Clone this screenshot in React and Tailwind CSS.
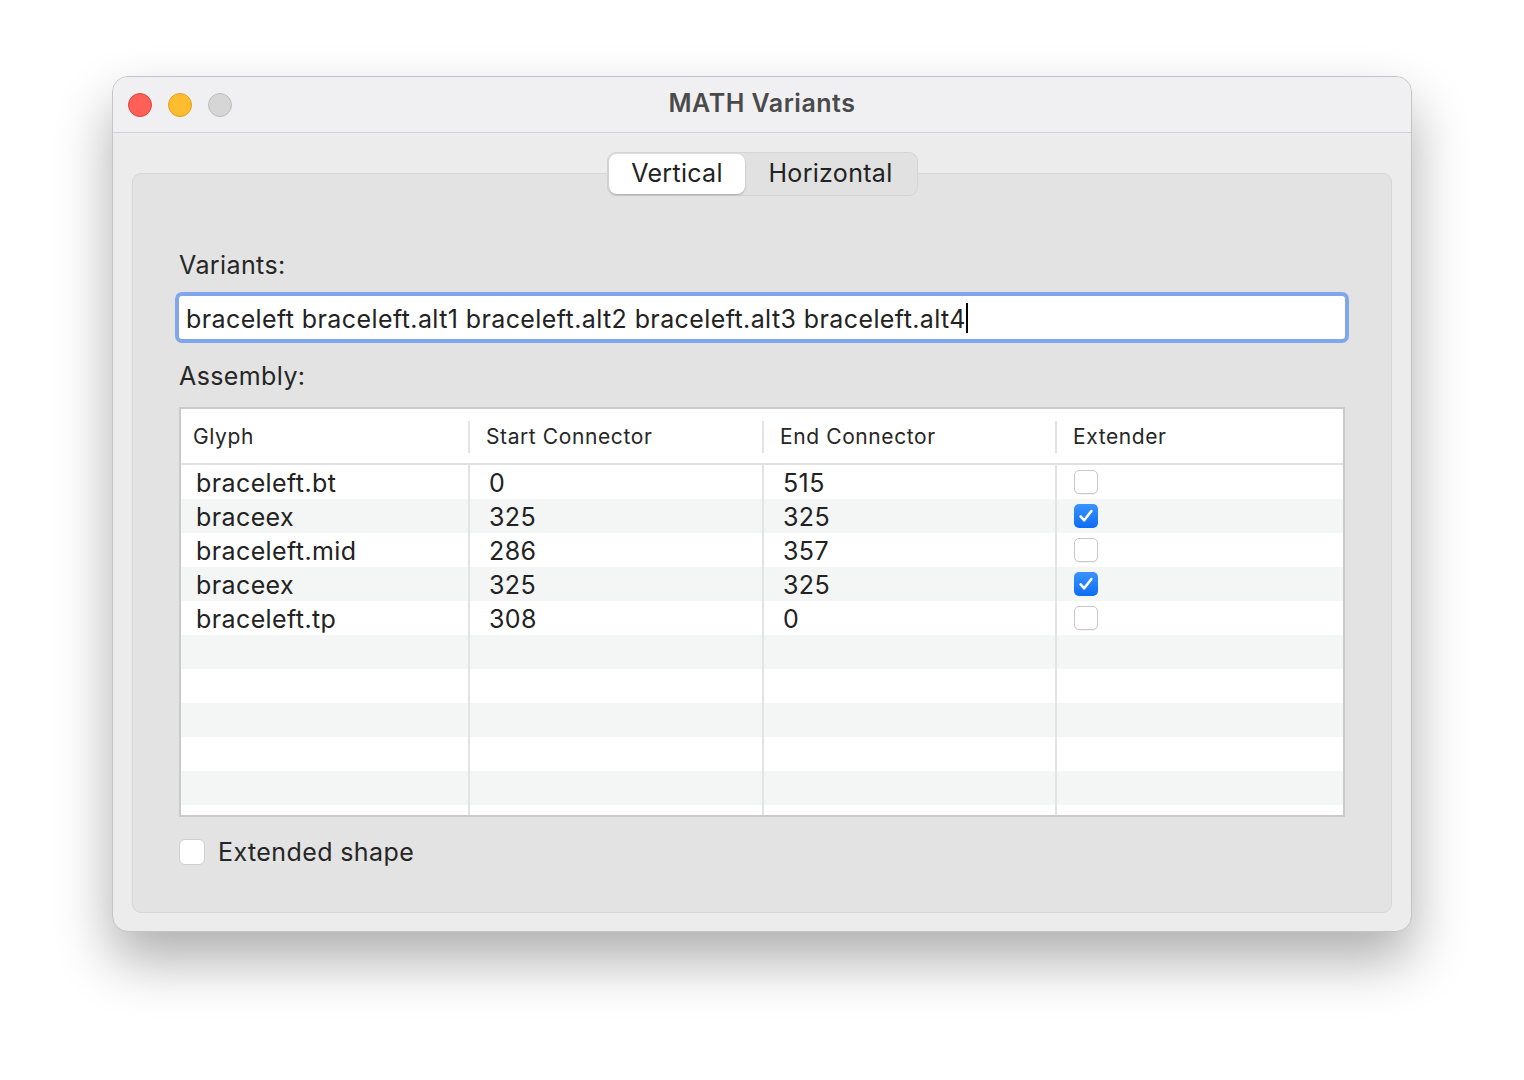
import { Fragment } from 'react';

const rows = [
  { glyph: 'braceleft.bt', start: '0', end: '515', ext: false },
  { glyph: 'braceex', start: '325', end: '325', ext: true },
  { glyph: 'braceleft.mid', start: '286', end: '357', ext: false },
  { glyph: 'braceex', start: '325', end: '325', ext: true },
  { glyph: 'braceleft.tp', start: '308', end: '0', ext: false },
  null, null, null, null, null, null,
];

function CheckBox({ checked }) {
  if (checked) {
    return (
      <div className="w-[24px] h-[24px] rounded-[5px] bg-gradient-to-b from-[#3a93ff] to-[#0a6cf5] flex items-center justify-center">
        <svg width="18" height="18" viewBox="0 0 16 16" fill="none">
          <path d="M3.2 8.4 L6.4 11.8 L12.8 3.6" stroke="white" strokeWidth="2.3" strokeLinecap="round" strokeLinejoin="round" />
        </svg>
      </div>
    );
  }
  return <div className="w-[24px] h-[24px] rounded-[5px] bg-white border border-[#c9c9c9] shadow-[0_1px_1px_rgba(0,0,0,0.05)]" />;
}

export default function App() {
  return (
    <div className="w-[1524px] h-[1080px] bg-white pt-[76px] pl-[112px]" style={{ fontFamily: 'Inter, "Noto Sans", sans-serif' }}>
      <div className="w-[1300px] h-[856px] rounded-[16px] bg-[#ececec] border border-[#c4c4c4] overflow-hidden shadow-[0_28px_55px_rgba(0,0,0,0.32)] flex flex-col">
        {/* title bar */}
        <div className="h-[56px] bg-[#f0f0f2] border-b border-[#d2d2d2] flex items-center px-[15px] relative shrink-0">
          <div className="flex gap-[16px]">
            <div className="w-[24px] h-[24px] rounded-full bg-[#fe5f57] border border-[#e0443e]" />
            <div className="w-[24px] h-[24px] rounded-full bg-[#febc2e] border border-[#dea123]" />
            <div className="w-[24px] h-[24px] rounded-full bg-[#d6d6d6] border border-[#bdbdbd]" />
          </div>
          <div className="absolute inset-0 flex items-center justify-center text-[25px] font-semibold text-[#4a4a4a] tracking-[0.5px] pb-[2px]">
            MATH Variants
          </div>
        </div>

        <div className="flex-1 px-[19px] pt-[19px] pb-[20px] relative">
          {/* tab box */}
          <div className="mt-[21px] h-[740px] rounded-[9px] bg-[#e3e3e3] border border-[#d6d6d6] px-[46px] pt-[77px] text-[25px] tracking-[0.4px]">
            <div className="text-[#262626] leading-[28px]">Variants:</div>
            <div className="mt-[13px] ml-[-4px] mr-[-4px] rounded-[7px] border-[4px] border-[#80a7ec] bg-white h-[51px] flex items-center pl-[7px]">
              <span className="text-[#222] leading-[28px] pt-[3px]">braceleft braceleft.alt1 braceleft.alt2 braceleft.alt3 braceleft.alt4</span>
              <span className="w-[2px] h-[30px] bg-black" />
            </div>
            <div className="mt-[19px] text-[#262626] leading-[28px]">Assembly:</div>

            {/* table */}
            <div className="mt-[17px] h-[410px] border-[2px] border-[#cacaca] bg-white overflow-hidden">
              <div className="h-[56px] border-b-[2px] border-[#e1e1e1] flex items-center text-[21px] tracking-[0.6px] text-[#262626] pt-[2px]">
                <div className="w-[289px] pl-[12px] border-r-[2px] border-[#e3e3e3] h-[32px] flex items-center">Glyph</div>
                <div className="w-[294px] pl-[16px] border-r-[2px] border-[#e3e3e3] h-[32px] flex items-center">Start Connector</div>
                <div className="w-[293px] pl-[16px] border-r-[2px] border-[#e3e3e3] h-[32px] flex items-center">End Connector</div>
                <div className="flex-1 pl-[16px] h-[32px] flex items-center">Extender</div>
              </div>
              {rows.map((r, i) => (
                <div key={i} className={`h-[34px] flex items-center text-[#222] ${i % 2 === 1 ? 'bg-[#f4f5f5]' : 'bg-white'}`}>
                  <div className="w-[289px] pl-[15px] pt-[3px] h-full flex items-center border-r-[2px] border-[#e3e3e3]">{r && r.glyph}</div>
                  <div className="w-[294px] pl-[19px] pt-[3px] h-full flex items-center border-r-[2px] border-[#e3e3e3]">{r && r.start}</div>
                  <div className="w-[293px] pl-[19px] pt-[3px] h-full flex items-center border-r-[2px] border-[#e3e3e3]">{r && r.end}</div>
                  <div className="flex-1 pl-[17px] h-full flex items-center">
                    {r && <CheckBox checked={r.ext} />}
                  </div>
                </div>
              ))}
            </div>

            <div className="mt-[21px] flex items-center gap-[13px]">
              <div className="w-[26px] h-[26px] rounded-[6px] bg-white border border-[#cfcfcf]" />
              <span className="text-[#262626] leading-[28px]">Extended shape</span>
            </div>
          </div>

          {/* segmented control */}
          <div className="absolute top-[19px] left-[494px] w-[311px] h-[44px] rounded-[9px] bg-[#e1e1e1] border border-[#d4d4d4] flex p-[1px] text-[25px] tracking-[0.3px]">
            <div className="w-[136px] h-full rounded-[8px] bg-white shadow-[0_1px_2px_rgba(0,0,0,0.25)] flex items-center justify-center text-[#222]">Vertical</div>
            <div className="flex-1 flex items-center justify-center text-[#222]">Horizontal</div>
          </div>
        </div>
      </div>
    </div>
  );
}
